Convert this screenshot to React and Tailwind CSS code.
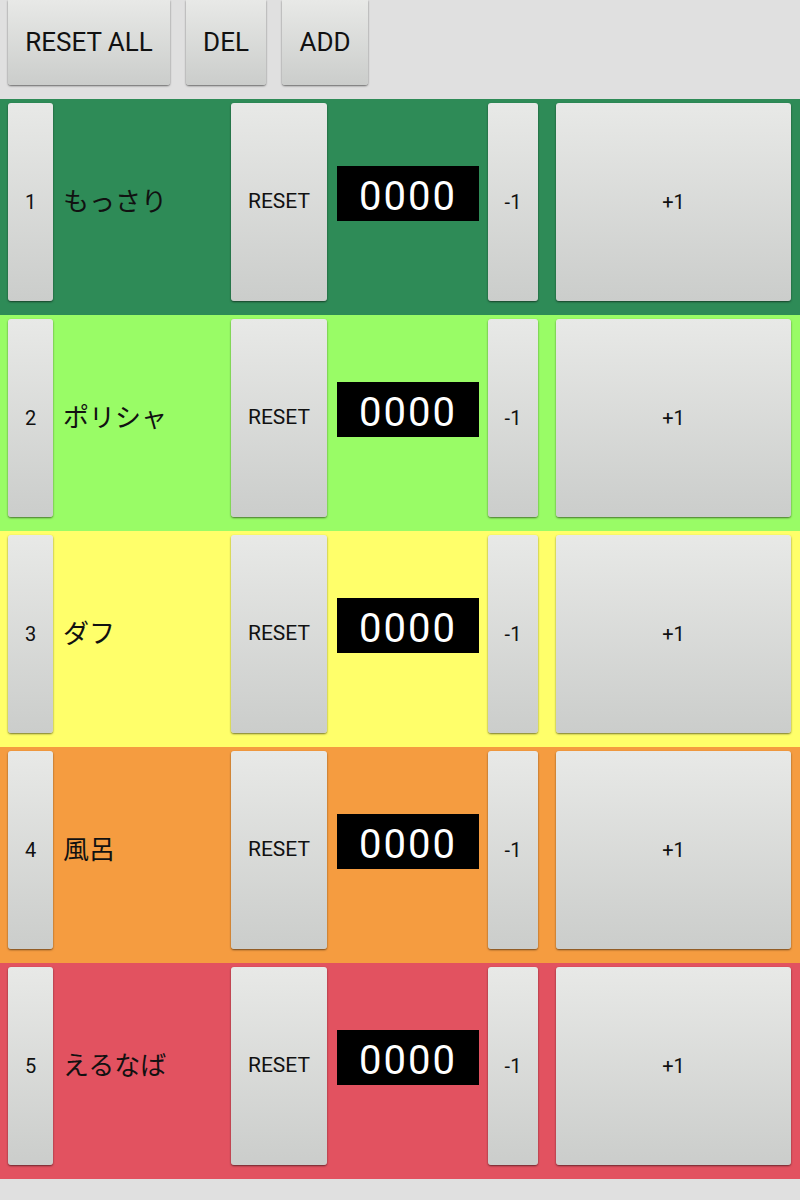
const rows = [
  { n: 1, name: 'もっさり', bg: 'bg-[#2e8b57]' },
  { n: 2, name: 'ポリシャ', bg: 'bg-[#99fc66]' },
  { n: 3, name: 'ダフ', bg: 'bg-[#ffff6a]' },
  { n: 4, name: '風呂', bg: 'bg-[#f59c40]' },
  { n: 5, name: 'えるなば', bg: 'bg-[#e25260]' },
];

const btn =
  'flex items-center justify-center rounded-[3px] bg-gradient-to-b from-[#e8e9e7] to-[#cbcdcb] text-[#111] shadow-[0_1px_2px_rgba(0,0,0,0.55)]';

function Row({ n, name, bg }) {
  return (
    <div className={`flex h-[216px] items-start pt-[4px] ${bg}`}>
      <div className={`${btn} ml-[8px] h-[198px] w-[45px] text-[20px]`}>{n}</div>
      <div className="flex h-[198px] w-[178px] items-center pl-[10px] text-[26px] text-[#111]">
        {name}
      </div>
      <div className={`${btn} h-[198px] w-[96px] text-[21px]`}>RESET</div>
      <div className="flex h-[198px] w-[161px] items-start pt-[63px]">
        <div className="ml-[10px] flex h-[55px] w-[142px] items-center justify-center bg-black pt-[6px] text-[40px] tracking-[2px] text-white">
          0000
        </div>
      </div>
      <div className={`${btn} h-[198px] w-[50px] text-[20px]`}>-1</div>
      <div className={`${btn} ml-[18px] h-[198px] w-[235px] text-[20px]`}>+1</div>
    </div>
  );
}

export default function App() {
  return (
    <div
      className="h-[1200px] w-[800px] overflow-hidden bg-[#e0e0e0]"
      style={{ fontFamily: 'Roboto, "Noto Sans CJK JP", sans-serif' }}
    >
      <div className="flex h-[99px] items-start gap-[16px] pl-[8px]">
        <div className={`${btn} h-[85px] w-[162px] rounded-t-none text-[26px]`}>RESET ALL</div>
        <div className={`${btn} h-[85px] w-[80px] rounded-t-none text-[26px]`}>DEL</div>
        <div className={`${btn} h-[85px] w-[86px] rounded-t-none text-[26px]`}>ADD</div>
      </div>
      {rows.map((r) => (
        <Row key={r.n} {...r} />
      ))}
    </div>
  );
}
